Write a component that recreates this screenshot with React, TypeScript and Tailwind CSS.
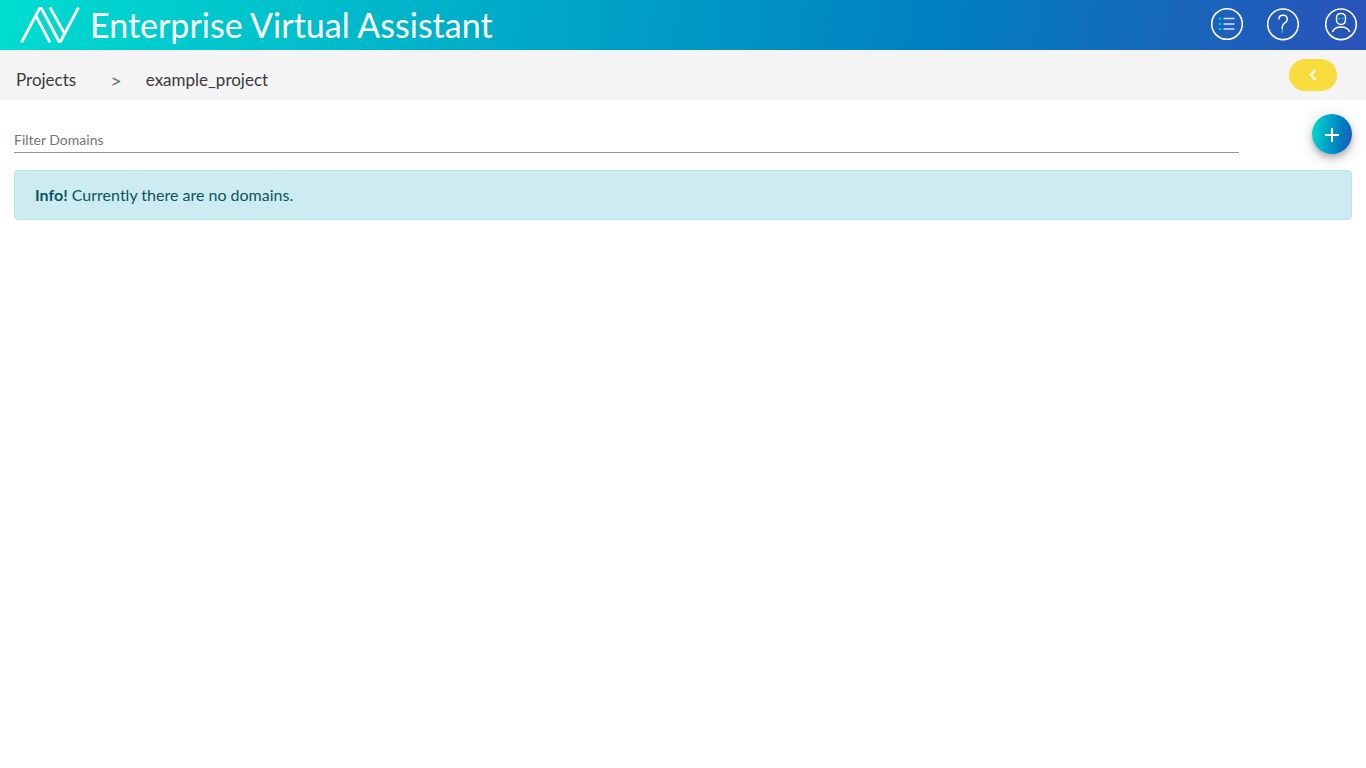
import React from "react";

function Logo() {
  return (
    <svg width="60" height="36" viewBox="0 0 60 36" fill="none" stroke="white" strokeWidth="2.8" strokeLinejoin="bevel" aria-hidden="true">
      <path d="M1.5 35.5 L19.5 1.5 H21.5 L39 34.5 H40.5 L58.5 0.5" />
      <path d="M16 9 L30 35.5" />
      <path d="M30 0.5 L44.5 26.5" />
    </svg>
  );
}

function ListIcon() {
  return (
    <svg width="34" height="34" viewBox="0 0 34 34" fill="none" aria-hidden="true">
      <circle cx="17" cy="17" r="15.3" stroke="white" strokeWidth="1.6" />
      <path d="M13.5 11.5H24.5M13.5 17H24.5M13.5 22H24.5" stroke="#d5e2f3" strokeWidth="1.7" />
      <path d="M9 11.5H11M9 17H11M9 22H11" stroke="#00d5cf" strokeWidth="1.8" />
    </svg>
  );
}

function HelpIcon() {
  return (
    <svg width="34" height="34" viewBox="0 0 34 34" fill="none" aria-hidden="true">
      <circle cx="17" cy="17.3" r="15.3" stroke="white" strokeWidth="1.6" />
      <path d="M12.8 12.5C12.8 9.8 14.4 8.2 17 8.2C19.7 8.2 21.3 9.9 21.3 12.3C21.3 14.2 20.2 15.2 18.6 16.2C17 17.2 16.3 18.2 16.3 20V22.5" stroke="white" strokeWidth="1.4" />
      <path d="M16.3 23.5V25.7" stroke="#00d5cf" strokeWidth="1.6" />
    </svg>
  );
}

function UserIcon() {
  return (
    <svg width="34" height="34" viewBox="0 0 34 34" fill="none" aria-hidden="true">
      <circle cx="17" cy="17.3" r="15.3" stroke="white" strokeWidth="1.6" />
      <path d="M12.5 10.5C12.5 7.7 14.2 6.5 17 6.5S21.5 7.7 21.5 10.5V12.5C21.5 15.5 19.8 17.5 17 17.5S12.5 15.5 12.5 12.5Z" stroke="white" strokeWidth="1.4" />
      <path d="M8.5 25C9.5 21.7 12.7 19.9 17 19.9S24.5 21.7 25.7 25" stroke="white" strokeWidth="1.5" />
      <path d="M14.5 11.5H16.3M17.8 11.5H19.6" stroke="#00d5cf" strokeWidth="1.6" />
    </svg>
  );
}

export default function App() {
  return (
    <div className="min-h-screen bg-white font-['Lato',sans-serif]">
      <header className="flex h-[50px] items-center justify-between bg-[linear-gradient(98deg,#00ddd0_0%,#007fc1_69%,#2a52b8_100%)] pl-5 pr-2">
        <div className="flex items-center gap-[10px]">
          <Logo />
          <h1 className="text-[34px] leading-[50px] text-white">Enterprise Virtual Assistant</h1>
        </div>
        <nav className="flex items-center pb-0.5" aria-label="Main">
          <button type="button" aria-label="List" className="mr-[22px]"><ListIcon /></button>
          <button type="button" aria-label="Help" className="mr-6"><HelpIcon /></button>
          <button type="button" aria-label="Account"><UserIcon /></button>
        </nav>
      </header>

      <div className="flex h-[50px] items-center justify-between bg-[#f4f4f4] pl-4 pr-[29px]">
        <nav className="flex items-center pt-[10px] text-[17px] leading-7 text-[#3a3a3a]" aria-label="Breadcrumb">
          <a href="#projects">Projects</a>
          <span className="pl-[34px] pr-6 text-xl leading-7 text-[#6c757d]">&gt;</span>
          <a href="#example_project">example_project</a>
        </nav>
        <button type="button" aria-label="Back" className="flex h-8 w-12 items-center justify-center rounded-full bg-[#f8dc3d]">
          <svg width="8" height="12" viewBox="0 0 8 12" fill="none" stroke="white" strokeWidth="2.2" aria-hidden="true">
            <path d="M6.6 1L1.6 6L6.6 11" />
          </svg>
        </button>
      </div>

      <main className="px-[14px] pt-[14px]">
        <div className="flex items-start justify-between">
          <input
            type="text"
            aria-label="Filter Domains"
            placeholder="Filter Domains"
            className="mr-[73px] mt-3 h-[27px] min-w-0 flex-1 border-b border-[#949494] text-sm outline-none placeholder:text-[#757575]"
          />
          <button
            type="button"
            aria-label="Add domain"
            className="flex size-10 items-center justify-center rounded-full bg-[linear-gradient(98deg,#00ddd0_0%,#007fc1_69%,#2a52b8_100%)] pt-0.5 shadow-[0_3px_5px_-1px_rgba(0,0,0,0.2),0_6px_10px_0_rgba(0,0,0,0.14),0_1px_18px_0_rgba(0,0,0,0.12)]"
          >
            <svg width="14" height="14" viewBox="0 0 14 14" stroke="white" strokeWidth="2" aria-hidden="true">
              <path d="M7 0V14M0 7H14" />
            </svg>
          </button>
        </div>
        <div role="alert" className="mt-4 rounded border border-[#b8e7ec] bg-[#cdecf1] px-5 py-3 text-base text-[#0c5460]">
          <strong className="font-bold">Info!</strong> Currently there are no domains.
        </div>
      </main>
    </div>
  );
}
